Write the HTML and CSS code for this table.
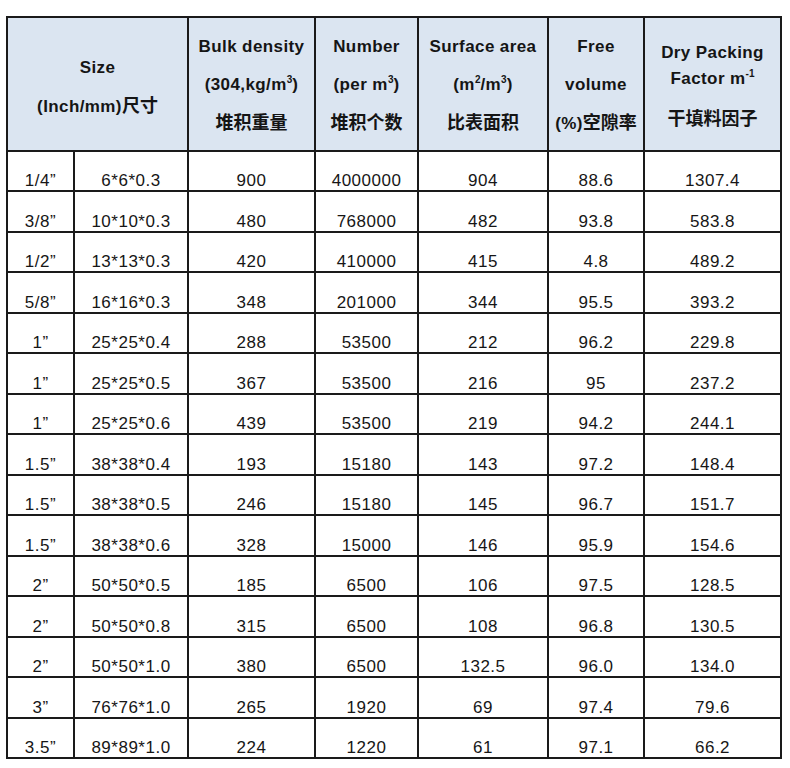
FILE: index.html
```html
<!DOCTYPE html>
<html>
<head>
<meta charset="utf-8">
<link rel="stylesheet" href="styles.css">
</head>
<body>
<table class="spec">
  <colgroup>
    <col class="c1"><col class="c2"><col class="c3"><col class="c4"><col class="c5"><col class="c6"><col class="c7">
  </colgroup>
  <thead>
    <tr class="head">
      <th colspan="2"><div class="h2l"><div>Size</div><div>(Inch/mm)<span class="cjk">尺寸</span></div></div></th>
      <th><div class="h3l"><div>Bulk density</div><div>(304,kg/m<sup>3</sup>)</div><div class="cjk">堆积重量</div></div></th>
      <th><div class="h3l"><div>Number</div><div>(per m<sup>3</sup>)</div><div class="cjk">堆积个数</div></div></th>
      <th><div class="h3l"><div>Surface area</div><div>(m<sup>2</sup>/m<sup>3</sup>)</div><div class="cjk">比表面积</div></div></th>
      <th><div class="h3l"><div>Free</div><div>volume</div><div>(%)<span class="cjk">空隙率</span></div></div></th>
      <th><div class="hdry"><div class="d1">Dry Packing</div><div class="d2">Factor m<sup>-1</sup></div><div class="d3 cjk">干填料因子</div></div></th>
    </tr>
  </thead>
  <tbody>
    <tr><td>1/4”</td><td>6*6*0.3</td><td>900</td><td>4000000</td><td>904</td><td>88.6</td><td>1307.4</td></tr>
    <tr><td>3/8”</td><td>10*10*0.3</td><td>480</td><td>768000</td><td>482</td><td>93.8</td><td>583.8</td></tr>
    <tr><td>1/2”</td><td>13*13*0.3</td><td>420</td><td>410000</td><td>415</td><td>4.8</td><td>489.2</td></tr>
    <tr><td>5/8”</td><td>16*16*0.3</td><td>348</td><td>201000</td><td>344</td><td>95.5</td><td>393.2</td></tr>
    <tr><td>1”</td><td>25*25*0.4</td><td>288</td><td>53500</td><td>212</td><td>96.2</td><td>229.8</td></tr>
    <tr><td>1”</td><td>25*25*0.5</td><td>367</td><td>53500</td><td>216</td><td>95</td><td>237.2</td></tr>
    <tr><td>1”</td><td>25*25*0.6</td><td>439</td><td>53500</td><td>219</td><td>94.2</td><td>244.1</td></tr>
    <tr><td>1.5”</td><td>38*38*0.4</td><td>193</td><td>15180</td><td>143</td><td>97.2</td><td>148.4</td></tr>
    <tr><td>1.5”</td><td>38*38*0.5</td><td>246</td><td>15180</td><td>145</td><td>96.7</td><td>151.7</td></tr>
    <tr><td>1.5”</td><td>38*38*0.6</td><td>328</td><td>15000</td><td>146</td><td>95.9</td><td>154.6</td></tr>
    <tr><td>2”</td><td>50*50*0.5</td><td>185</td><td>6500</td><td>106</td><td>97.5</td><td>128.5</td></tr>
    <tr><td>2”</td><td>50*50*0.8</td><td>315</td><td>6500</td><td>108</td><td>96.8</td><td>130.5</td></tr>
    <tr><td>2”</td><td>50*50*1.0</td><td>380</td><td>6500</td><td>132.5</td><td>96.0</td><td>134.0</td></tr>
    <tr><td>3”</td><td>76*76*1.0</td><td>265</td><td>1920</td><td>69</td><td>97.4</td><td>79.6</td></tr>
    <tr><td>3.5”</td><td>89*89*1.0</td><td>224</td><td>1220</td><td>61</td><td>97.1</td><td>66.2</td></tr>
  </tbody>
</table>
</body>
</html>
```
FILE: styles.css
```css
html, body {
  margin: 0;
  padding: 0;
  background: #ffffff;
}
body {
  font-family: "Liberation Sans", "Noto Sans CJK SC", sans-serif;
  color: #111111;
}
.spec {
  border-collapse: collapse;
  table-layout: fixed;
  width: 774px;
  margin: 16px 0 0 6px;
}
.c1 { width: 67px; }
.c2 { width: 114px; }
.c3 { width: 127px; }
.c4 { width: 103px; }
.c5 { width: 130px; }
.c6 { width: 96px; }
.c7 { width: 137px; }
.spec th, .spec td {
  border: 2px solid #1a1a1a;
  text-align: center;
  padding: 0;
}
.spec th {
  background: #dbe5f1;
  height: 132px;
  font-weight: bold;
  font-size: 17px;
  letter-spacing: 0.4px;
  vertical-align: middle;
  color: #151515;
}
.spec .cjk {
  font-size: 18px;
  letter-spacing: 0;
}
.h3l {
  padding-top: 2px;
}
.h3l > div {
  line-height: 38px;
  white-space: nowrap;
}
.h2l {
  padding-top: 6px;
}
.h2l > div {
  line-height: 38px;
  white-space: nowrap;
}
.hdry {
  padding-top: 6px;
}
.hdry > div {
  white-space: nowrap;
}
.hdry .d1 { line-height: 26px; }
.hdry .d2 { line-height: 26px; }
.hdry .d3 { line-height: 30px; margin-top: 12px; }
.spec sup {
  font-size: 10px;
  line-height: 0;
  vertical-align: 7px;
  letter-spacing: 0;
}
.spec td {
  height: 38.47px;
  font-size: 17px;
  letter-spacing: 0.5px;
  line-height: 19px;
  vertical-align: bottom;
  padding-bottom: 0;
  color: #161616;
}
```
